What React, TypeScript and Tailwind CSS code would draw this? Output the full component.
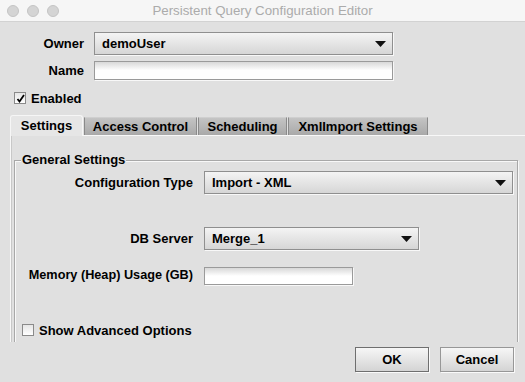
import React from 'react';

const font = { fontFamily: '"Liberation Sans", Arial, sans-serif' };

const Arrow = () => (
  <svg width="11" height="6" viewBox="0 0 11 6" className="shrink-0">
    <path d="M0 0 H11 L5.5 6 Z" fill="#111" />
  </svg>
);

const Combo = ({ value, width }: { value: string; width: string }) => (
  <div
    className={`${width} h-[23px] flex items-center justify-between pl-[7px] pr-[6px] border border-[#8f8f8f] bg-gradient-to-b from-[#f4f4f4] to-[#d6d6d6] shadow-[1px_1px_0_#f8f8f8] text-[13px] font-bold text-black`}
  >
    <span>{value}</span>
    <Arrow />
  </div>
);

const Field = ({ width, height }: { width: string; height: string }) => (
  <div
    className={`${width} ${height} border border-[#9a9a9a] bg-gradient-to-b from-[#d8d8d8] via-white to-white shadow-[1px_1px_0_#f8f8f8]`}
  />
);

const Check = ({ checked }: { checked?: boolean }) => (
  <div className="w-[12px] h-[12px] border border-[#8a8a8a] bg-gradient-to-b from-[#e6e6e6] to-white flex items-center justify-center">
    {checked && (
      <svg width="9" height="9" viewBox="0 0 9 9">
        <path d="M1.5 5 L3.5 7.5 L8 1" stroke="#000" strokeWidth="1.8" fill="none" />
      </svg>
    )}
  </div>
);

const tabs = [
  { label: 'Settings', w: 'w-[73px]' },
  { label: 'Access Control', w: 'w-[113px]' },
  { label: 'Scheduling', w: 'w-[89px]' },
  { label: 'XmlImport Settings', w: 'w-[140px]' },
];

export default function App() {
  return (
    <div className="w-[525px] h-[382px] bg-[#e0e0e0] flex flex-col overflow-hidden text-black" style={font}>
      {/* title bar */}
      <div className="h-[22px] shrink-0 bg-[#f6f6f6] border-b border-[#d2d2d2] flex items-center">
        <div className="w-[80px] flex items-center gap-[8px] pl-[7px]">
          <span className="w-[12px] h-[12px] rounded-full bg-[#d4d4d4] border border-[#c4c4c4]" />
          <span className="w-[12px] h-[12px] rounded-full bg-[#d4d4d4] border border-[#c4c4c4]" />
          <span className="w-[12px] h-[12px] rounded-full bg-[#d4d4d4] border border-[#c4c4c4]" />
        </div>
        <div className="flex-1 text-center text-[13.3px] text-[#ababab]">Persistent Query Configuration Editor</div>
        <div className="w-[80px]" />
      </div>

      {/* owner / name */}
      <div className="flex items-center gap-[10px] mt-[10px] h-[23px]">
        <div className="w-[84px] text-right text-[13px] font-bold">Owner</div>
        <Combo value="demoUser" width="w-[299px]" />
      </div>
      <div className="flex items-center gap-[10px] mt-[6px] h-[19px]">
        <div className="w-[84px] text-right text-[13px] font-bold">Name</div>
        <Field width="w-[299px]" height="h-[19px]" />
      </div>
      <div className="flex items-center gap-[5px] pl-[14px] mt-[12px] h-[12px]">
        <Check checked />
        <span className="text-[13px] font-bold leading-none">Enabled</span>
      </div>

      {/* tabs */}
      <div className="flex items-end pl-[10px] mt-[11px] h-[20px] shrink-0">
        {tabs.map((t, i) =>
          i === 0 ? (
            <div
              key={t.label}
              className={`${t.w} h-[21px] flex items-center justify-center text-[13px] font-bold bg-[#e6e6e6] border border-b-0 border-[#f6f6f6] rounded-t-[3px] relative z-10 -mb-px`}
            >
              {t.label}
            </div>
          ) : (
            <div
              key={t.label}
              className={`${t.w} h-[18px] flex items-center justify-center text-[13px] font-bold bg-gradient-to-b from-[#c4c4c4] to-[#a9a9a9] border border-b-0 border-[#8a8a8a] border-t-[#cfcfcf] ml-px`}
            >
              {t.label}
            </div>
          )
        )}
      </div>

      {/* tab panel */}
      <div className="h-[207px] shrink-0 ml-[10px] border-t border-l border-[#f8f8f8] shadow-[inset_1px_0_0_#c8c8c8] overflow-hidden pt-[24px] pl-[3px] pr-[7px]">
        <div className="relative border border-[#a8a8a8] shadow-[inset_1px_1px_0_#f8f8f8,1px_1px_0_#f8f8f8] h-[240px] pt-[10px]">
          <div className="absolute -top-[9px] left-[6px] px-[1px] bg-[#e0e0e0] text-[13px] font-bold leading-[16px]">
            General Settings
          </div>
          <div className="flex items-center gap-[11px] h-[23px]">
            <div className="w-[178px] text-right text-[13px] font-bold">Configuration Type</div>
            <Combo value="Import - XML" width="w-[309px]" />
          </div>
          <div className="flex items-center gap-[11px] mt-[33px] h-[23px]">
            <div className="w-[178px] text-right text-[13px] font-bold">DB Server</div>
            <Combo value="Merge_1" width="w-[215px]" />
          </div>
          <div className="flex items-center gap-[11px] mt-[17px] h-[18px]">
            <div className="w-[178px] text-right text-[12.7px] font-bold whitespace-nowrap">Memory (Heap) Usage (GB)</div>
            <Field width="w-[149px]" height="h-[18px]" />
          </div>
          <div className="flex items-center gap-[5px] pl-[7px] mt-[39px] h-[12px]">
            <Check />
            <span className="text-[13px] font-bold leading-none">Show Advanced Options</span>
          </div>
        </div>
      </div>

      {/* buttons */}
      <div className="flex justify-end gap-[11px] pr-[11px] mt-[5px]">
        <button className="w-[74px] h-[25px] text-[13px] font-bold border border-[#6f6f6f] bg-gradient-to-b from-[#f6f6f6] to-[#d4d4d4] shadow-[1px_1px_0_#fafafa]">
          OK
        </button>
        <button className="w-[74px] h-[25px] text-[13px] font-bold border border-[#979797] bg-gradient-to-b from-[#f6f6f6] to-[#d4d4d4] shadow-[1px_1px_0_#fafafa]">
          Cancel
        </button>
      </div>
    </div>
  );
}
